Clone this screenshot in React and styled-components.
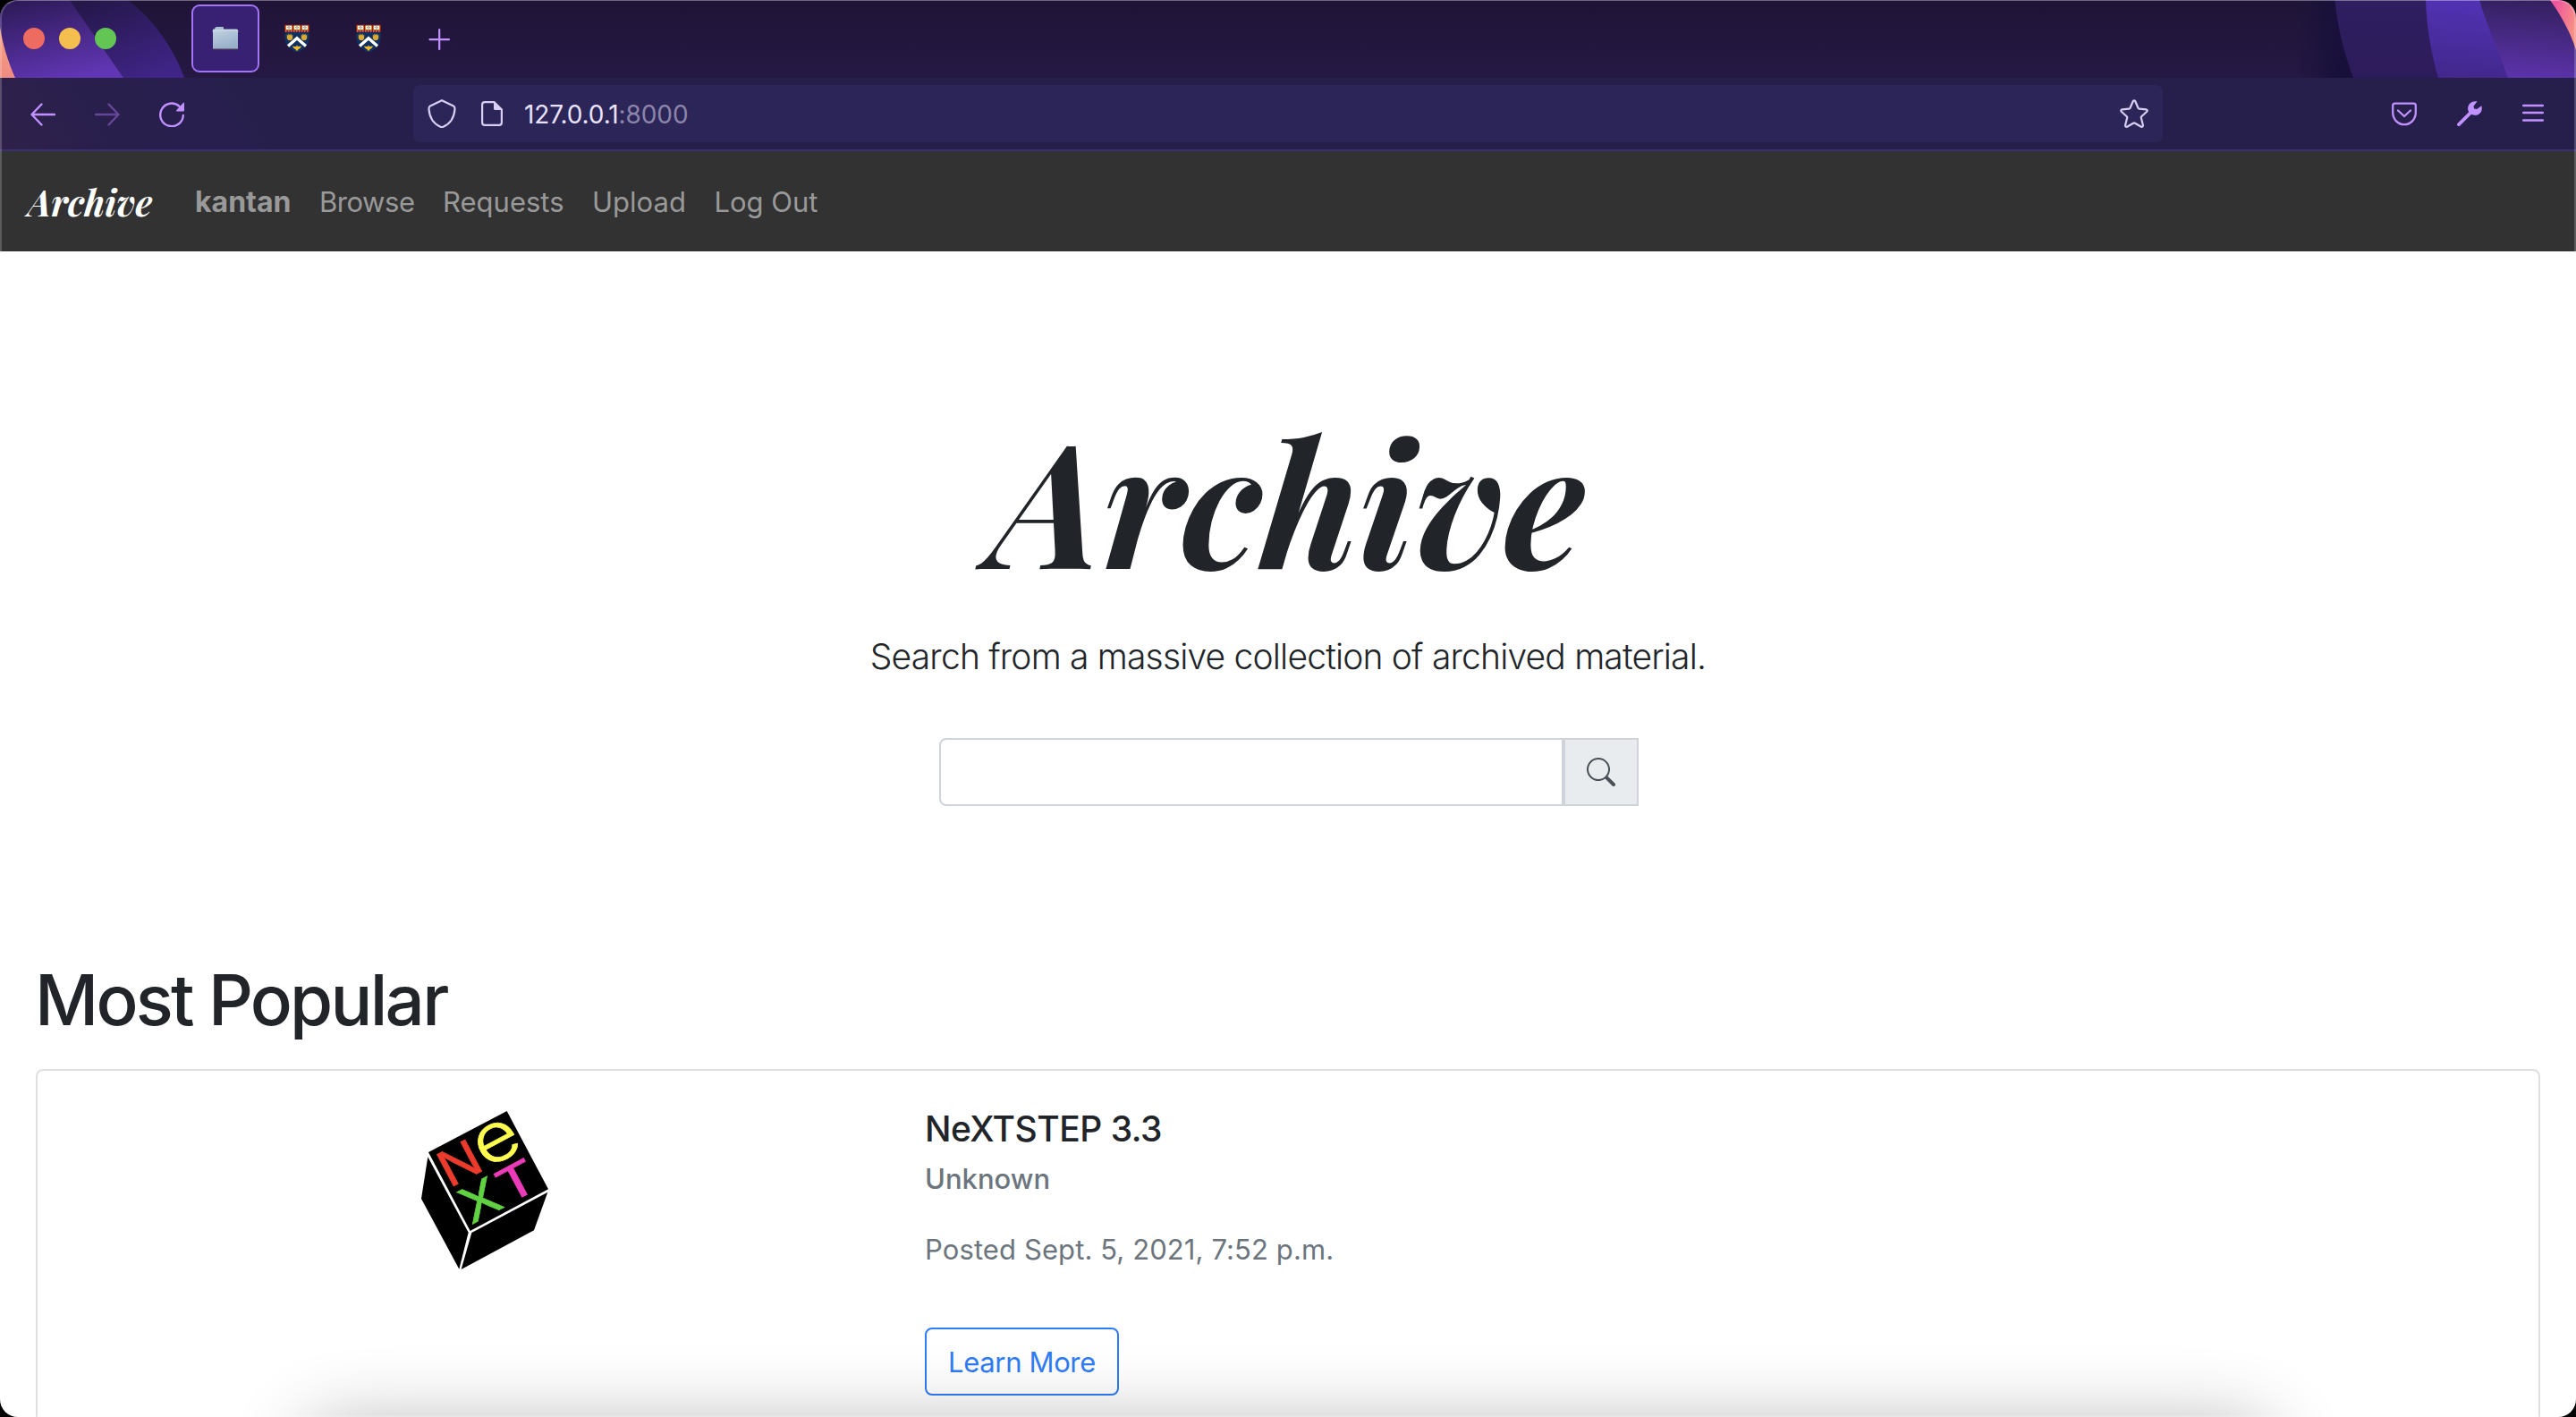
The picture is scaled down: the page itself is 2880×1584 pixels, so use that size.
import React from 'react';
import styled, { createGlobalStyle } from 'styled-components';

const GlobalStyle = createGlobalStyle`
  * { box-sizing: border-box; }
  html, body { margin: 0; padding: 0; background: #000; overflow: hidden; }
  body { font-family: Inter, "Liberation Sans", sans-serif; color: #212529; }
`;

const serif = '"Playfair Display", "Liberation Serif", serif';

const Window = styled.div`
  position: relative;
  display: flex;
  flex-direction: column;
  width: 2880px;
  height: 1584px;
  border-radius: 20px;
  overflow: hidden;
  background: #fff;
`;

const WindowEdge = styled.div`
  position: absolute;
  inset: 0;
  border-radius: 20px;
  pointer-events: none;
  border: 2px solid rgba(255, 255, 255, 0.2);
  border-top: 1px solid rgba(255, 255, 255, 0.36);
`;

const DockShadow = styled.div`
  position: absolute;
  left: 340px;
  right: 340px;
  top: 1594px;
  height: 120px;
  border-radius: 40px;
  box-shadow: 0 0 84px rgba(0, 0, 0, 0.31);
  pointer-events: none;
`;

/* ---------- browser chrome ---------- */

const TabBar = styled.div`
  position: relative;
  display: flex;
  align-items: center;
  height: 87px;
  flex: none;
  padding: 0 26px 1px;
  background: linear-gradient(#1f1437, #251843);
`;

const ThemeArt = styled.svg`
  position: absolute;
  top: 0;
  ${(p) => (p.$side === 'left' ? 'left: 0;' : 'right: 0;')}
`;

const TrafficLights = styled.div`
  position: relative;
  display: flex;
  gap: 16px;
  width: 188px;
`;

const Light = styled.span`
  width: 24px;
  height: 24px;
  border-radius: 50%;
  background: ${(p) => p.$color};
`;

const Tabs = styled.div`
  position: relative;
  display: flex;
  gap: 4px;
`;

const Tab = styled.div`
  display: flex;
  align-items: center;
  justify-content: center;
  width: 76px;
  height: 76px;
  border-radius: 9px;
  border: 2px solid ${(p) => (p.$active ? '#a274f6' : 'transparent')};
  background: ${(p) => (p.$active ? '#382073' : 'transparent')};
`;

const Toolbar = styled.div`
  display: flex;
  align-items: center;
  height: 82px;
  flex: none;
  padding: 0 36px 0 34px;
  border-bottom: 2px solid #383070;
  background: linear-gradient(58deg, #2f2149 0, #291f4d 110px, #281f4e 230px, #261f4b 260px, #261f4b 2740px, #2a1f50 2880px);
`;

const NavButtons = styled.div`
  display: flex;
  align-items: center;
  gap: 44px;
  width: 428px;
  padding-top: 2px;
`;

const UrlBar = styled.div`
  display: flex;
  align-items: center;
  width: 1956px;
  height: 64px;
  padding: 0 16px 0 16px;
  border-radius: 8px;
  background: #2c2658;
`;

const SiteInfo = styled.span`
  display: flex;
  align-items: center;
  gap: 28px;
`;

const Url = styled.span`
  margin-left: 24px;
  flex: 1;
  font-size: 28px;
  line-height: 40px;
  letter-spacing: -0.1px;
  color: #e9e2ff;
  padding-top: 2px;
`;

const Port = styled.span`
  color: #8b84ab;
`;

const ToolButtons = styled.div`
  display: flex;
  align-items: center;
  justify-content: flex-end;
  gap: 45px;
  flex: 1;
`;

/* ---------- site ---------- */

const Navbar = styled.nav`
  display: flex;
  align-items: center;
  height: 112px;
  flex: none;
  padding: 2px 0 0 31px;
  background: #323232;
`;

const Brand = styled.span`
  width: 187px;
  font: italic 700 40px/60px ${serif};
  letter-spacing: 0.15px;
  color: #fff;
`;

const NavLinks = styled.div`
  display: flex;
  gap: 31.5px;
`;

const NavLink = styled.a`
  font-size: ${(p) => (p.$strong ? 32 : 31)}px;
  line-height: 48px;
  font-weight: ${(p) => (p.$strong ? 700 : 400)};
  letter-spacing: ${(p) => p.$tracking || 0}px;
  color: #999;
`;

const Hero = styled.section`
  display: flex;
  flex-direction: column;
  align-items: center;
  padding-top: 160px;
  height: 789px;
  flex: none;
`;

const HeroTitle = styled.h1`
  margin: 0;
  font: italic 700 192px/230px ${serif};
  color: #212529;
`;

const Lead = styled.p`
  margin: 33px 0 0;
  font-size: 39px;
  font-weight: 350;
  line-height: 60px;
  letter-spacing: -0.82px;
  white-space: nowrap;
`;

const SearchGroup = styled.div`
  display: flex;
  width: 782px;
  height: 76px;
  margin: 61px 0 0 2px;
`;

const SearchInput = styled.input`
  flex: 1;
  min-width: 0;
  padding: 0 24px;
  border: 2px solid #ced4da;
  border-radius: 8px 0 0 8px;
  background: #fff;
  font: 400 32px/48px Inter, sans-serif;
  outline: none;
`;

const SearchButton = styled.button`
  display: flex;
  align-items: center;
  justify-content: center;
  width: 84px;
  padding: 0;
  border: 2px solid #ced4da;
  background: #e9ecef;
  color: #495057;
`;

const Popular = styled.section`
  display: flex;
  flex-direction: column;
  padding: 0 40px;
`;

const SectionTitle = styled.h2`
  margin: 0 0 29px -1px;
  font-size: 78px;
  font-weight: 530;
  line-height: 96px;
  letter-spacing: -2.75px;
`;

const Card = styled.article`
  display: flex;
  height: 520px;
  border: 2px solid #dfdfdf;
  border-radius: 8px;
`;

const CardMedia = styled.div`
  display: flex;
  justify-content: center;
  width: 992px;
  padding: 33px 0 0 14px;
`;

const CardBody = styled.div`
  display: flex;
  flex-direction: column;
  align-items: flex-start;
  padding-top: 41px;
`;

const CardTitle = styled.h5`
  margin: 0;
  font-size: 39px;
  font-weight: 500;
  line-height: 48px;
  letter-spacing: -0.5px;
`;

const CardSubtitle = styled.h6`
  margin: 13px 0 36px;
  font-size: 31px;
  font-weight: 500;
  line-height: 38px;
  color: #6c757d;
`;

const CardMeta = styled.p`
  margin: 0 0 63px;
  font-size: 31px;
  line-height: 48px;
  letter-spacing: 0.1px;
  color: #6c757d;
`;

const OutlineButton = styled.a`
  width: 217px;
  height: 76px;
  padding-top: 1px;
  border: 2px solid #2f7cf6;
  border-radius: 8px;
  font-size: 31px;
  line-height: 71px;
  letter-spacing: -0.35px;
  text-align: center;
  color: #2f7cf6;
`;

/* ---------- drawings ---------- */

const purple = '#c192ff';
const lilac = '#d8cff2';

const LeftArt = () => (
  <ThemeArt $side="left" width="320" height="87" viewBox="0 0 320 87">
    <defs>
      <linearGradient id="la" x1="0.25" y1="0" x2="0.6" y2="1">
        <stop offset="0" stopColor="#2f1b5b" />
        <stop offset="1" stopColor="#6136b4" />
      </linearGradient>
      <linearGradient id="lb" x1="0.2" y1="0" x2="0.75" y2="1">
        <stop offset="0" stopColor="#25174a" />
        <stop offset="1" stopColor="#402588" />
      </linearGradient>
      <linearGradient id="lc" x1="0" y1="0" x2="0" y2="1">
        <stop offset="0" stopColor="#f5a27f" />
        <stop offset="1" stopColor="#f08c83" />
      </linearGradient>
    </defs>
    <path d="M78 0H143C172 22 193 52 206 87H138Z" fill="url(#lb)" />
    <path d="M0 0H78L138 87H0Z" fill="url(#la)" />
    <path d="M0 30C3 50 9 69 17 87H0Z" fill="url(#lc)" />
  </ThemeArt>
);

const RightArt = () => (
  <ThemeArt $side="right" width="320" height="87" viewBox="2560 0 320 87">
    <defs>
      <linearGradient id="ra" x1="0" y1="0" x2="1" y2="0">
        <stop offset="0" stopColor="#17103a" stopOpacity="0" />
        <stop offset="0.75" stopColor="#17103a" />
        <stop offset="1" stopColor="#19103a" />
      </linearGradient>
      <linearGradient id="rb" x1="0" y1="0" x2="0" y2="1">
        <stop offset="0" stopColor="#2f1f60" />
        <stop offset="1" stopColor="#2d1b5b" />
      </linearGradient>
      <linearGradient id="rc" x1="0.3" y1="0" x2="0.1" y2="1">
        <stop offset="0" stopColor="#5232b4" />
        <stop offset="1" stopColor="#42278b" />
      </linearGradient>
      <linearGradient id="rd" x1="0.55" y1="0" x2="0.45" y2="1">
        <stop offset="0" stopColor="#34205f" />
        <stop offset="1" stopColor="#5c33ab" />
      </linearGradient>
      <linearGradient id="re" x1="0" y1="0" x2="1" y2="0.5">
        <stop offset="0.2" stopColor="#f0559e" />
        <stop offset="1" stopColor="#f79384" />
      </linearGradient>
    </defs>
    <path d="M2568 0H2612L2633 87H2568Z" fill="url(#ra)" />
    <path d="M2610.500 0C2613 30 2621 60 2631 87H2880V0Z" fill="url(#rb)" />
    <path d="M2712 0C2713 30 2718 60 2726 87H2880V0Z" fill="url(#rc)" />
    <path d="M2772 0C2780 28 2794 58 2804 87H2880V0Z" fill="url(#rd)" />
    <path d="M2851 0C2863 17 2874 36 2880 56V0Z" fill="url(#re)" />
  </ThemeArt>
);

const FolderIcon = () => (
  <svg width="32" height="32" viewBox="0 0 32 32">
    <defs>
      <linearGradient id="fo" x1="0" y1="0" x2="0.4" y2="1">
        <stop offset="0" stopColor="#c3d3e2" />
        <stop offset="1" stopColor="#97b0c9" />
      </linearGradient>
    </defs>
    <path d="M4 5.500Q4 3 6 3H13.500Q14 3 14 4V5.500H29V9H2V5.500Z" fill="#a9bfd3" />
    <path d="M1.600 7.500Q1.600 6.300 3 6.300H29Q30.400 6.300 30.400 7.500L30 10V27.500H2V10Z" fill="url(#fo)" />
    <path d="M2 6.800H30" stroke="#d6e2ec" strokeWidth="0.900" />
    <path d="M2 27.700H30" stroke="#79766f" strokeWidth="1" />
  </svg>
);

const CrestIcon = () => (
  <svg width="28" height="32" viewBox="0 0 28 32">
    <path d="M0.500 8H27.500V16C27.500 24 21 29 14 31.800C7 29 0.500 24 0.500 16Z" fill="#12305f" />
    <path d="M0 0.500H28V9H0Z" fill="#8f1714" />
    <path d="M1 7.900H27" stroke="#e8d5cf" strokeWidth="0.900" strokeDasharray="1.500 1.500" />
    {[1.2, 10.2, 19.2].map((x) => (
      <g key={x}>
        <rect x={x} y="1.600" width="7.600" height="5" fill="#e0a636" />
        <rect x={x + 0.8} y="1.800" width="6" height="4" fill="#fff" />
        <path d={`M${x + 3.8} 2V5.500M${x + 1.8} 3.600H${x + 3}M${x + 4.6} 3.800H${x + 6}`} stroke="#7d786c" strokeWidth="0.900" />
      </g>
    ))}
    {[2.8, 18.8].map((x) => (
      <path key={x} d={`M${x} 11.500L${x + 1.5} 13V10.500L${x + 3.2} 12L${x + 4.9} 10.500V13L${x + 6.4} 11.500V16L${x + 4.8} 18H${x + 1.6}L${x} 16Z`} fill="#dba92c" />
    ))}
    <path d="M4 24.500L14 15.800L24 24.500" fill="none" stroke="#fff" strokeWidth="3.300" />
    <path d="M9 24.800C10.500 24.300 12 25.500 13.200 25L14 23L14.800 25L19 24.600C18 27 17 27.700 15.200 28.200V29.500H12.800V28.200C11 27.700 10 26.500 9 24.800Z" fill="#e9ba32" />
  </svg>
);

const Stroke = ({ color = purple, width = 2, children }) => (
  <svg
    width="32"
    height="32"
    viewBox="0 0 32 32"
    fill="none"
    stroke={color}
    strokeWidth={width}
    strokeLinecap="round"
    strokeLinejoin="round"
  >
    {children}
  </svg>
);

const PlusIcon = () => (
  <Stroke width={2.2}><path d="M4.500 17.200H26M15.200 6.200V28" /></Stroke>
);
const BackIcon = () => (
  <svg width="28" height="28" viewBox="0 0 28 28" fill="none" stroke={purple} strokeWidth="2.400" strokeLinecap="round" strokeLinejoin="round">
    <path d="M27 14H1.500M12.500 2.500L1.500 14L12.500 25.500" />
  </svg>
);
const ForwardIcon = () => (
  <svg width="28" height="28" viewBox="0 0 28 28" fill="none" stroke="#67469a" strokeWidth="2.400" strokeLinecap="round" strokeLinejoin="round">
    <path d="M1 14H26.500M15.500 2.500L26.500 14L15.500 25.500" />
  </svg>
);
const ReloadIcon = () => (
  <svg width="28" height="28" viewBox="0 0 28 28" fill="none">
    <path d="M26.800 15A12.800 12.800 0 1 1 22.500 4.800" stroke={purple} strokeWidth="2.400" strokeLinecap="round" />
    <path d="M28 1.200V9.500Q28 10.500 27 10.500H19.800Q18.400 10.300 19.200 9.300L26.800 0.900Q28 0 28 1.200Z" fill={purple} />
  </svg>
);
const ShieldIcon = () => (
  <Stroke color={lilac} width={2.2}>
    <path d="M16 1.200L29 7.600Q30.700 8.400 30.500 11C29.800 20.500 25 27.500 17.500 30.700Q16 31.400 14.500 30.700C7 27.500 2.200 20.500 1.500 11Q1.300 8.400 3 7.600Z" />
  </Stroke>
);
const PageIcon = () => (
  <svg width="24" height="28" viewBox="0 0 24 28" fill="none">
    <path d="M4 1.100H14.500L22.900 9.500V24Q22.900 26.900 20 26.900H4Q1.100 26.900 1.100 24V4Q1.100 1.100 4 1.100Z" stroke={lilac} strokeWidth="2.200" />
    <path d="M14 1L23.500 10H15.500Q14 10 14 8.500Z" fill={lilac} />
  </svg>
);
const StarIcon = () => (
  <Stroke color={lilac} width={2.2}>
    <path d="M14.700 2.200Q16 0.600 17.300 2.200L20.500 9.700Q20.900 10.500 21.800 10.600L29.400 11.400Q31.600 12 30.200 13.800L24.200 19.200Q23.600 19.800 23.800 20.600L25.900 29Q26 31.200 23.900 30.700L17 26.700Q16 26.100 15 26.700L8.100 30.700Q6 31.200 6.100 29L8.200 20.600Q8.400 19.800 7.800 19.200L1.800 13.800Q0.400 12 2.600 11.400L10.200 10.600Q11.100 10.500 11.500 9.700Z" />
  </Stroke>
);
const PocketIcon = () => (
  <svg width="28" height="28" viewBox="0 0 28 28" fill="none" stroke={purple} strokeWidth="2.300" strokeLinecap="round" strokeLinejoin="round">
    <path d="M3.500 2.600H24.500Q26.800 2.600 26.800 5V12.500C26.800 20.500 21 26.200 14 26.200S1.200 20.500 1.200 12.500V5Q1.200 2.600 3.500 2.600Z" />
    <path d="M7 10.500L14 17L21 10.500" />
  </svg>
);
const WrenchIcon = () => (
  <svg width="28" height="28" viewBox="0 0 28 28">
    <path d="M2 26.200L16 12.200" stroke={purple} strokeWidth="3.800" strokeLinecap="round" />
    <path d="M22.500 0.400L18.600 5.400L19 8.600L22.200 9L27.400 5.200C29 11.500 25 16 20 15.700C14.500 15.500 11.500 11.500 12.200 7C13 2.500 17 -0.800 22.500 0.400Z" fill={purple} />
  </svg>
);
const MenuIcon = () => (
  <svg width="24" height="28" viewBox="0 0 24 28" stroke={purple} strokeWidth="2.500" strokeLinecap="round">
    <path d="M1.200 5H22.800M1.200 13H22.800M1.200 21.500H22.800" />
  </svg>
);
const SearchIcon = () => (
  <svg width="32" height="32" viewBox="0 0 16 16" fill="currentColor">
    <path d="M11.742 10.344a6.500 6.500 0 1 0-1.397 1.398h-.001c.03.040.062.078.098.115l3.850 3.850a1 1 0 0 0 1.415-1.414l-3.850-3.850a1.007 1.007 0 0 0-.115-.1zM12 6.500a5.500 5.500 0 1 1-11 0 5.500 5.500 0 0 1 11 0z" />
  </svg>
);

const LogoDrawing = styled.svg`
  overflow: visible;
`;

const LogoLetter = styled.text`
  font-family: Inter, sans-serif;
  font-size: ${(p) => p.$size}px;
  font-weight: ${(p) => p.$weight || 400};
  text-anchor: middle;
  fill: ${(p) => p.$color};
  stroke: ${(p) => p.$color};
  stroke-width: 2px;
`;

const NextLogo = () => (
  <LogoDrawing width="170" height="200" viewBox="0 0 510 600">
    <path d="M57 174L320 36L459 298L197 438Z" />
    <path d="M55 190L191 443L160 566L33 330Z" />
    <path d="M202 444L457 308L411 436L167 567Z" />
    <LogoLetter $size={165} $color="#ea3b2c" y="60" transform="translate(161 210) rotate(-28) scale(1.120 1)">N</LogoLetter>
    <LogoLetter $size={228} $weight={300} $color="#fffb4f" y="62" transform="translate(287 141) rotate(-28) scale(1.160 1)">e</LogoLetter>
    <LogoLetter $size={156} $color="#ea3bb8" y="57" transform="translate(353 270) rotate(-28) scale(1.320 1)">T</LogoLetter>
    <LogoLetter $size={164} $color="#60d142" y="60" transform="translate(230 334) rotate(-28) scale(1.180 1)">X</LogoLetter>
  </LogoDrawing>
);

export default function App() {
  return (
    <>
      <GlobalStyle />
      <Window>
        <TabBar>
          <LeftArt />
          <RightArt />
          <TrafficLights>
            <Light $color="#ed6b60" />
            <Light $color="#f5bf4f" />
            <Light $color="#62c554" />
          </TrafficLights>
          <Tabs>
            <Tab $active><FolderIcon /></Tab>
            <Tab><CrestIcon /></Tab>
            <Tab><CrestIcon /></Tab>
            <Tab><PlusIcon /></Tab>
          </Tabs>
        </TabBar>
        <Toolbar>
          <NavButtons>
            <BackIcon />
            <ForwardIcon />
            <ReloadIcon />
          </NavButtons>
          <UrlBar>
            <SiteInfo>
              <ShieldIcon />
              <PageIcon />
            </SiteInfo>
            <Url>127.0.0.1<Port>:8000</Port></Url>
            <StarIcon />
          </UrlBar>
          <ToolButtons>
            <PocketIcon />
            <WrenchIcon />
            <MenuIcon />
          </ToolButtons>
        </Toolbar>
        <Navbar>
          <Brand>Archive</Brand>
          <NavLinks>
            <NavLink $strong>kantan</NavLink>
            <NavLink $tracking={-0.45}>Browse</NavLink>
            <NavLink>Requests</NavLink>
            <NavLink>Upload</NavLink>
            <NavLink>Log Out</NavLink>
          </NavLinks>
        </Navbar>
        <Hero>
          <HeroTitle>Archive</HeroTitle>
          <Lead>Search from a massive collection of archived material.</Lead>
          <SearchGroup>
            <SearchInput aria-label="Search" />
            <SearchButton aria-label="Search"><SearchIcon /></SearchButton>
          </SearchGroup>
        </Hero>
        <Popular>
          <SectionTitle>Most Popular</SectionTitle>
          <Card>
            <CardMedia><NextLogo /></CardMedia>
            <CardBody>
              <CardTitle>NeXTSTEP 3.3</CardTitle>
              <CardSubtitle>Unknown</CardSubtitle>
              <CardMeta>Posted Sept. 5, 2021, 7:52 p.m.</CardMeta>
              <OutlineButton>Learn More</OutlineButton>
            </CardBody>
          </Card>
        </Popular>
        <DockShadow />
        <WindowEdge />
      </Window>
    </>
  );
}
